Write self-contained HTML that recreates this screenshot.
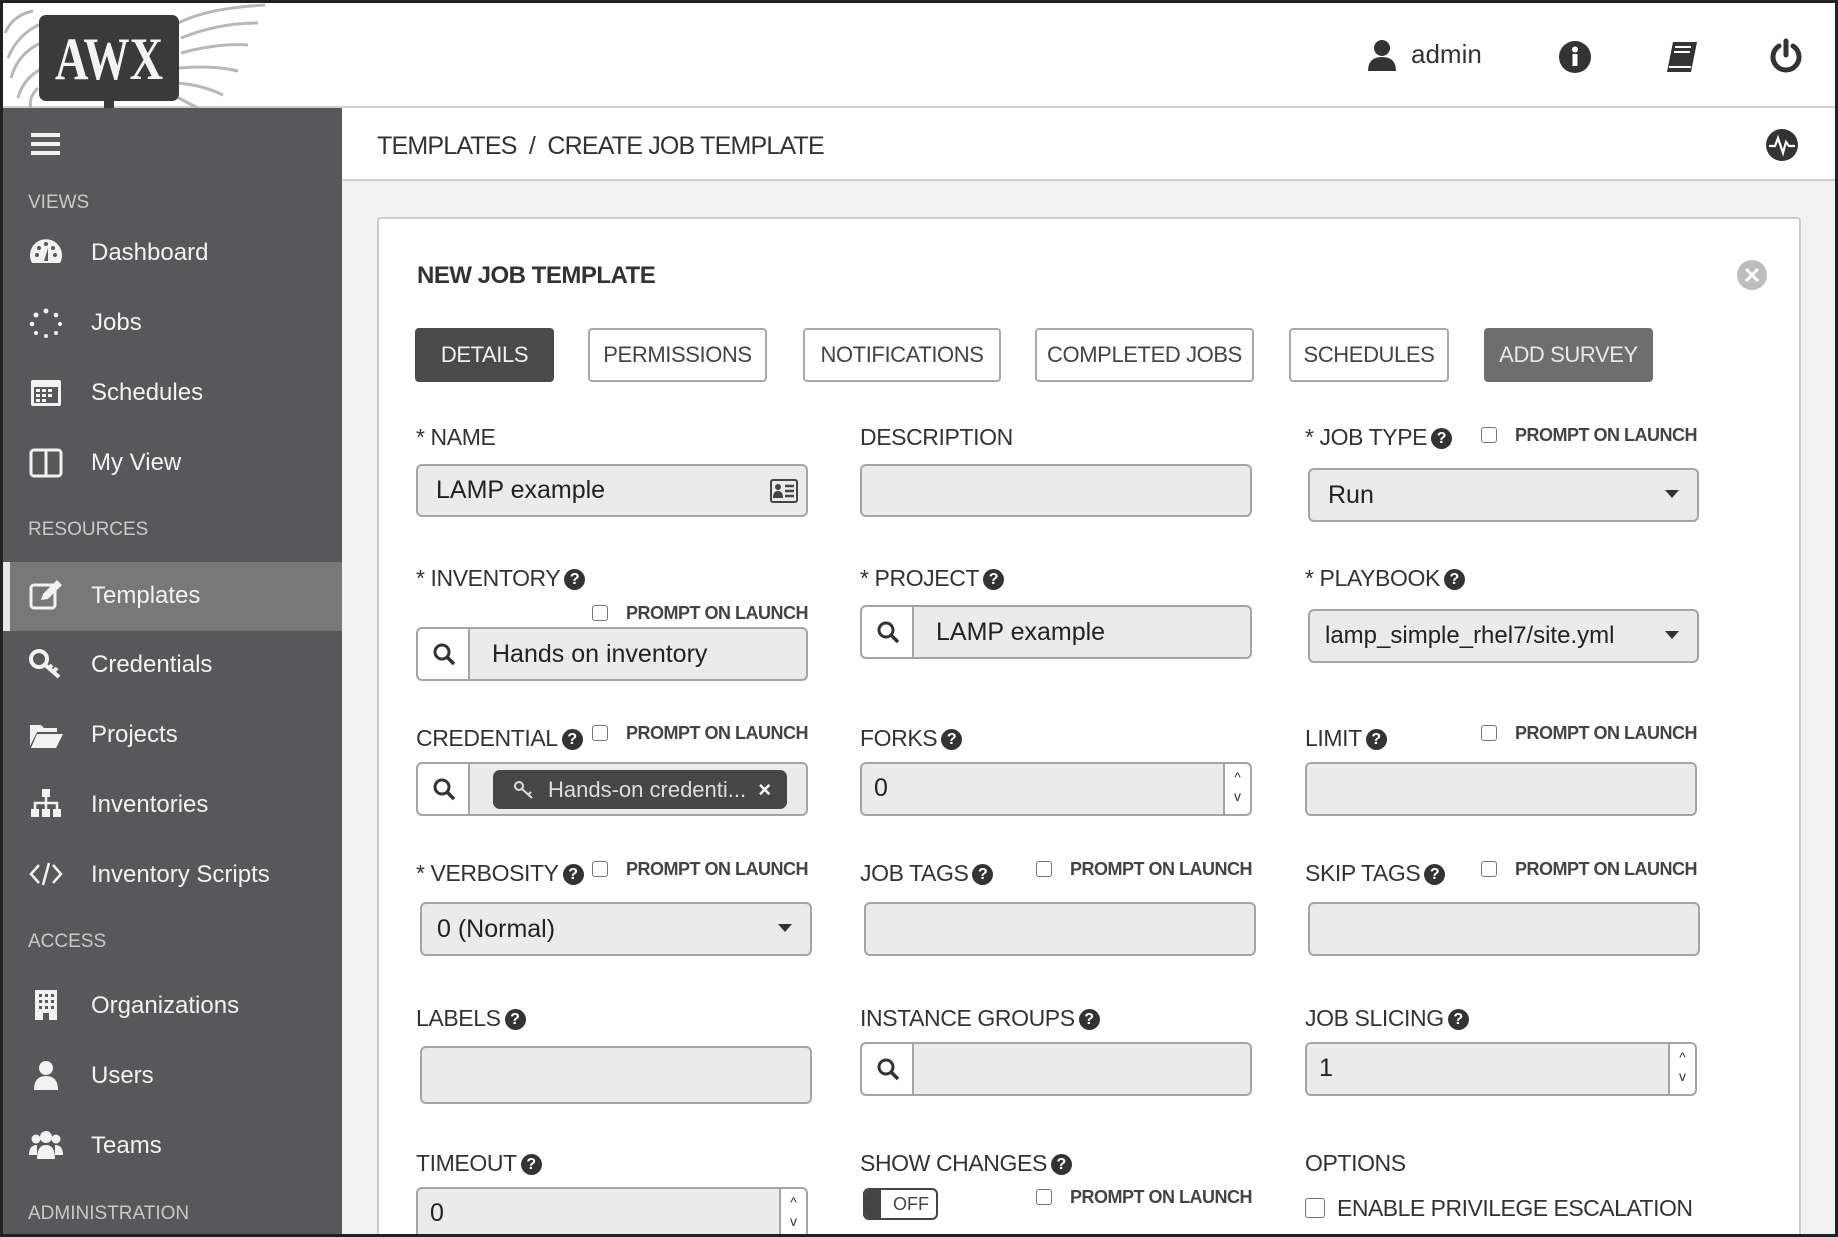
<!DOCTYPE html>
<html><head><meta charset="utf-8"><style>
*{box-sizing:border-box;margin:0;padding:0}
body{width:1838px;height:1237px;overflow:hidden;background:#222;font-family:"Liberation Sans",sans-serif;position:relative}
.a{position:absolute}
#frame{position:absolute;left:3px;top:3px;width:1832px;height:1231px;background:#f2f2f2;overflow:hidden}
#hdr{left:0;top:0;width:1832px;height:105px;background:#fff;border-bottom:2px solid #cfcfcf}
#side{left:0;top:105px;width:339px;height:1130px;background:#58585a}
.sec{color:#c9c9c9;font-size:19px;left:25px}
.it{color:#f2f2f2;font-size:24px;left:88px}
.ic{left:26px;width:34px;height:30px;fill:#f2f2f2}
#bc{left:339px;top:105px;width:1493px;height:73px;background:#fff;border-bottom:2px solid #cfcfcf}
#card{left:374px;top:214px;width:1424px;height:1030px;background:#fff;border:2px solid #cdcdcd;border-radius:4px}
.lbl{font-size:23px;color:#333;white-space:nowrap;letter-spacing:-0.4px}
.q{display:inline-block;width:21px;height:21px;border-radius:50%;background:#333;color:#fff;font-size:16px;font-weight:bold;text-align:center;line-height:21px;vertical-align:2px;margin-left:4px;letter-spacing:0}
.pol{font-size:18px;color:#444;white-space:nowrap;font-weight:bold;letter-spacing:-0.5px}
.cb{display:inline-block;width:16px;height:16px;border:1.5px solid #777;border-radius:3px;vertical-align:-2px;margin-right:18px;background:#fff}
.inp{background:#ebebeb;border:2px solid #a5a5a5;border-radius:6px;font-size:25px;color:#222;line-height:48px;padding-left:18px}
.tab{top:327px;height:54px;border:2px solid #aaa;border-radius:4px;background:#fff;color:#444;font-size:22px;text-align:center;line-height:50px;letter-spacing:-0.4px}
.srch{position:absolute;left:0;top:0;bottom:0;width:52px;background:#fff;border-right:2px solid #a5a5a5;border-radius:5px 0 0 5px}
.spin{position:absolute;right:0;top:0;bottom:0;width:27px;background:#fff;border-left:2px solid #a5a5a5;border-radius:0 5px 5px 0;font-size:14px;line-height:19px;text-align:center;color:#333;padding-top:4px}
.car{position:absolute;right:18px;top:20px;border-left:7px solid transparent;border-right:7px solid transparent;border-top:8px solid #333}
</style></head><body>
<div id="frame">
<div id="hdr" class="a">
 <svg class="a" style="left:0;top:0" width="270" height="108" viewBox="0 0 270 108">
  <g stroke="#b8b8b8" stroke-width="3" fill="none">
   <path d="M40 20 Q15 30 5 55 M38 40 Q15 50 8 75 M40 65 Q20 75 15 95 M35 85 Q25 95 28 105 M30 8 Q10 12 2 30"/>
   <path d="M175 20 Q205 5 262 2 M178 35 Q215 20 255 20 M178 50 Q215 40 245 42 M176 65 Q210 62 235 68 M174 80 Q200 82 220 92 M170 92 Q185 100 195 105"/>
  </g>
  <rect x="36" y="12" width="140" height="86" rx="7" fill="#3a3a3a"/>
  <rect x="101" y="96" width="10" height="12" fill="#3a3a3a"/>
  <text x="52" y="76" textLength="108" lengthAdjust="spacingAndGlyphs" font-family="Liberation Serif,serif" font-weight="bold" font-size="60" fill="#f4f4f4">AWX</text>
 </svg>
 <svg class="a" style="left:1364px;top:36px" width="30" height="32" viewBox="0 0 30 32"><circle cx="15" cy="9" r="8" fill="#333"/><path d="M1 32 Q1 18 15 18 Q29 18 29 32Z" fill="#333"/></svg>
 <div class="a" style="left:1408px;top:36px;font-size:26px;color:#333">admin</div>
 <svg class="a" style="left:1555px;top:37px" width="34" height="34" viewBox="0 0 34 34"><circle cx="17" cy="17" r="16" fill="#333"/><rect x="14.5" y="14" width="5" height="12" fill="#fff"/><circle cx="17" cy="9.5" r="3" fill="#fff"/></svg>
 <svg class="a" style="left:1660px;top:36px" width="36" height="36" viewBox="0 0 36 36"><path d="M10 3 H34 L28 33 H4 Z" fill="#333"/><path d="M12 8 H28 M11 13 H27" stroke="#fff" stroke-width="2"/><path d="M6 28 H28" stroke="#fff" stroke-width="2"/></svg>
 <svg class="a" style="left:1765px;top:35px" width="36" height="36" viewBox="0 0 36 36"><path d="M11 8 A13 13 0 1 0 25 8" stroke="#333" stroke-width="5" fill="none" stroke-linecap="round"/><line x1="18" y1="3" x2="18" y2="17" stroke="#333" stroke-width="5" stroke-linecap="round"/></svg>
</div>

<div id="side" class="a">
 <div class="a" style="left:28px;top:25px;width:29px;height:4px;background:#f2f2f2;box-shadow:0 9px 0 #f2f2f2,0 18px 0 #f2f2f2"></div>
 <div class="a sec" style="top:84px">VIEWS</div>
 <svg class="a ic" style="top:130px" viewBox="0 0 34 30"><path d="M3 25 A16 16 0 1 1 31 25 Z"/><g fill="#58585a"><circle cx="8" cy="17" r="2"/><circle cx="10" cy="10" r="2"/><circle cx="17" cy="6" r="2"/><circle cx="26" cy="17" r="2"/><circle cx="24" cy="10" r="2"/><path d="M15 23 L19 10 L19 23Z"/></g></svg>
 <div class="a it" style="top:131px">Dashboard</div>
 <svg class="a ic" style="top:200px" viewBox="0 0 34 30"><g><circle cx="17" cy="3" r="2.5"/><circle cx="27" cy="7" r="2.3"/><circle cx="31" cy="16" r="2"/><circle cx="27" cy="25" r="2"/><circle cx="17" cy="28" r="2"/><circle cx="7" cy="25" r="2"/><circle cx="3" cy="16" r="2.3"/><circle cx="7" cy="7" r="2.5"/></g></svg>
 <div class="a it" style="top:201px">Jobs</div>
 <svg class="a ic" style="top:268px" viewBox="0 0 34 30"><rect x="2" y="4" width="30" height="26" rx="2"/><g fill="#58585a"><rect x="5" y="11" width="24" height="16"/></g><g><rect x="7" y="13" width="4" height="3"/><rect x="13" y="13" width="4" height="3"/><rect x="19" y="13" width="4" height="3"/><rect x="7" y="18" width="4" height="3"/><rect x="13" y="18" width="4" height="3"/><rect x="19" y="18" width="4" height="3"/><rect x="7" y="23" width="4" height="3"/><rect x="13" y="23" width="4" height="3"/></g></svg>
 <div class="a it" style="top:271px">Schedules</div>
 <svg class="a ic" style="top:340px" viewBox="0 0 34 30"><rect x="2" y="2" width="30" height="26" rx="3" fill="none" stroke="#f2f2f2" stroke-width="3"/><line x1="17" y1="2" x2="17" y2="28" stroke="#f2f2f2" stroke-width="3"/></svg>
 <div class="a it" style="top:341px">My View</div>
 <div class="a sec" style="top:411px">RESOURCES</div>
 <div class="a" style="left:0;top:454px;width:339px;height:69px;background:#787878"></div>
 <div class="a" style="left:0;top:454px;width:7px;height:69px;background:#e8e8e8"></div>
 <svg class="a ic" style="top:472px" viewBox="0 0 34 30"><rect x="2" y="5" width="24" height="23" rx="3" fill="none" stroke="#f2f2f2" stroke-width="3"/><path d="M12 20 L14 14 L28 0 L33 5 L19 19 Z"/></svg>
 <div class="a it" style="top:474px">Templates</div>
 <svg class="a ic" style="top:541px" viewBox="0 0 34 30"><circle cx="10" cy="10" r="8" fill="none" stroke="#f2f2f2" stroke-width="4"/><path d="M15 15 L30 28 M24 23 L28 19 M20 19 L23 16" stroke="#f2f2f2" stroke-width="4"/></svg>
 <div class="a it" style="top:543px">Credentials</div>
 <svg class="a ic" style="top:612px" viewBox="0 0 34 30"><path d="M1 5 H12 L15 8 H28 V12 H8 L1 26Z"/><path d="M8 14 H34 L27 28 H2Z"/></svg>
 <div class="a it" style="top:613px">Projects</div>
 <svg class="a ic" style="top:680px" viewBox="0 0 34 30"><rect x="13" y="1" width="8" height="8"/><rect x="2" y="21" width="8" height="8"/><rect x="13" y="21" width="8" height="8"/><rect x="24" y="21" width="8" height="8"/><path d="M17 9 V21 M6 21 V15 H28 V21" stroke="#f2f2f2" stroke-width="2.5" fill="none"/></svg>
 <div class="a it" style="top:683px">Inventories</div>
 <svg class="a ic" style="top:751px" viewBox="0 0 34 30"><path d="M10 6 L2 15 L10 24 M24 6 L32 15 L24 24 M20 4 L14 26" stroke="#f2f2f2" stroke-width="2.5" fill="none"/></svg>
 <div class="a it" style="top:753px">Inventory Scripts</div>
 <div class="a sec" style="top:823px">ACCESS</div>
 <svg class="a ic" style="top:882px" viewBox="0 0 34 30"><rect x="6" y="0" width="22" height="30"/><g fill="#58585a"><rect x="10" y="4" width="3" height="3"/><rect x="16" y="4" width="3" height="3"/><rect x="22" y="4" width="3" height="3"/><rect x="10" y="10" width="3" height="3"/><rect x="16" y="10" width="3" height="3"/><rect x="22" y="10" width="3" height="3"/><rect x="10" y="16" width="3" height="3"/><rect x="16" y="16" width="3" height="3"/><rect x="22" y="16" width="3" height="3"/><rect x="14" y="23" width="6" height="7"/></g></svg>
 <div class="a it" style="top:884px">Organizations</div>
 <svg class="a ic" style="top:952px" viewBox="0 0 34 30"><circle cx="17" cy="8" r="7"/><path d="M5 30 Q5 16 17 16 Q29 16 29 30Z"/></svg>
 <div class="a it" style="top:954px">Users</div>
 <svg class="a ic" style="top:1021px" viewBox="0 0 34 30"><circle cx="17" cy="8" r="6"/><circle cx="7" cy="10" r="4.5"/><circle cx="27" cy="10" r="4.5"/><path d="M8 30 Q8 16 17 16 Q26 16 26 30Z"/><path d="M0 26 Q0 16 8 16 L8 26Z M34 26 Q34 16 26 16 L26 26Z"/></svg>
 <div class="a it" style="top:1024px">Teams</div>
 <div class="a sec" style="top:1095px">ADMINISTRATION</div>
</div>

<div id="bc" class="a">
 <div class="a" style="left:35px;top:24px;font-size:25px;color:#333;letter-spacing:-0.8px">TEMPLATES &nbsp;/&nbsp; CREATE JOB TEMPLATE</div>
 <svg class="a" style="left:1423px;top:20px" width="34" height="34" viewBox="0 0 34 34"><circle cx="17" cy="17" r="16" fill="#333"/><path d="M4 18 H10 L13 10 L18 25 L21 14 L24 18 H30" stroke="#fff" stroke-width="2.2" fill="none"/></svg>
</div>

<div id="card" class="a">
 <div class="a" style="left:38px;top:43px;font-size:24px;font-weight:bold;color:#333;letter-spacing:-0.5px">NEW JOB TEMPLATE</div>
 <svg class="a" style="left:1357px;top:40px" width="32" height="32" viewBox="0 0 32 32"><circle cx="16" cy="16" r="15" fill="#bdbdbd"/><path d="M10 10 L22 22 M22 10 L10 22" stroke="#fff" stroke-width="3"/></svg>
</div>

<div class="a tab" style="left:412px;width:139px;background:#4a4a4a;border-color:#4a4a4a;color:#f2f2f2;top:325px">DETAILS</div>
<div class="a tab" style="left:585px;width:179px;top:325px">PERMISSIONS</div>
<div class="a tab" style="left:800px;width:198px;top:325px">NOTIFICATIONS</div>
<div class="a tab" style="left:1032px;width:219px;top:325px">COMPLETED JOBS</div>
<div class="a tab" style="left:1286px;width:160px;top:325px">SCHEDULES</div>
<div class="a tab" style="left:1481px;width:169px;background:#6e6e6e;border-color:#6e6e6e;color:#e8e8e8;top:325px">ADD SURVEY</div>

<!-- Row 1 -->
<div class="a lbl" style="left:413px;top:421px">* NAME</div>
<div class="a inp" style="left:413px;top:461px;width:392px;height:53px">LAMP example
 <svg class="a" style="right:8px;top:13px" width="28" height="24" viewBox="0 0 28 24"><rect x="1" y="1" width="26" height="22" rx="2" fill="none" stroke="#444" stroke-width="2"/><circle cx="8" cy="8" r="3" fill="#444"/><path d="M3 19 Q3 12 8 12 Q13 12 13 19Z" fill="#444"/><path d="M15 7 H24 M15 12 H24 M15 17 H24" stroke="#444" stroke-width="2.5"/></svg></div>
<div class="a lbl" style="left:857px;top:421px">DESCRIPTION</div>
<div class="a inp" style="left:857px;top:461px;width:392px;height:53px"></div>
<div class="a lbl" style="left:1302px;top:421px">* JOB TYPE<span class="q">?</span></div>
<div class="a pol" style="left:1478px;top:422px"><span class="cb"></span>PROMPT ON LAUNCH</div>
<div class="a inp" style="left:1305px;top:465px;width:391px;height:54px;line-height:50px">Run<span class="car"></span></div>

<!-- Row 2 -->
<div class="a lbl" style="left:413px;top:562px">* INVENTORY<span class="q">?</span></div>
<div class="a pol" style="left:589px;top:600px"><span class="cb"></span>PROMPT ON LAUNCH</div>
<div class="a inp" style="left:413px;top:624px;width:392px;height:54px;padding-left:74px;line-height:50px"><div class="srch"><svg style="margin:13px 0 0 14px" width="24" height="24" viewBox="0 0 24 24"><circle cx="10" cy="10" r="7" stroke="#333" stroke-width="3" fill="none"/><path d="M15 15 L22 22" stroke="#333" stroke-width="3.5"/></svg></div>Hands on inventory</div>
<div class="a lbl" style="left:857px;top:562px">* PROJECT<span class="q">?</span></div>
<div class="a inp" style="left:857px;top:602px;width:392px;height:54px;padding-left:74px;line-height:50px"><div class="srch"><svg style="margin:13px 0 0 14px" width="24" height="24" viewBox="0 0 24 24"><circle cx="10" cy="10" r="7" stroke="#333" stroke-width="3" fill="none"/><path d="M15 15 L22 22" stroke="#333" stroke-width="3.5"/></svg></div>LAMP example</div>
<div class="a lbl" style="left:1302px;top:562px">* PLAYBOOK<span class="q">?</span></div>
<div class="a inp" style="left:1305px;top:606px;width:391px;height:54px;line-height:50px;font-size:24px;padding-left:15px">lamp_simple_rhel7/site.yml<span class="car"></span></div>

<!-- Row 3 -->
<div class="a lbl" style="left:413px;top:722px">CREDENTIAL<span class="q">?</span></div>
<div class="a pol" style="left:589px;top:720px"><span class="cb"></span>PROMPT ON LAUNCH</div>
<div class="a inp" style="left:413px;top:759px;width:392px;height:54px"><div class="srch"><svg style="margin:13px 0 0 14px" width="24" height="24" viewBox="0 0 24 24"><circle cx="10" cy="10" r="7" stroke="#333" stroke-width="3" fill="none"/><path d="M15 15 L22 22" stroke="#333" stroke-width="3.5"/></svg></div>
 <div class="a" style="left:75px;top:6px;width:294px;height:39px;background:#474747;border-radius:7px;color:#ddd;font-size:22px;line-height:39px;padding-left:55px">Hands-on credenti... <b style="color:#fff;margin-left:6px">×</b>
 <svg class="a" style="left:20px;top:10px" width="22" height="20" viewBox="0 0 22 20"><circle cx="6" cy="6" r="4" stroke="#ddd" stroke-width="2" fill="none"/><path d="M9 9 L19 18 M15 15 L18 12" stroke="#ddd" stroke-width="2"/></svg></div></div>
<div class="a lbl" style="left:857px;top:722px">FORKS<span class="q">?</span></div>
<div class="a inp" style="left:857px;top:759px;width:392px;height:54px;padding-left:12px">0<div class="spin">^<br>v</div></div>
<div class="a lbl" style="left:1302px;top:722px">LIMIT<span class="q">?</span></div>
<div class="a pol" style="left:1478px;top:720px"><span class="cb"></span>PROMPT ON LAUNCH</div>
<div class="a inp" style="left:1302px;top:759px;width:392px;height:54px"></div>

<!-- Row 4 -->
<div class="a lbl" style="left:413px;top:857px">* VERBOSITY<span class="q">?</span></div>
<div class="a pol" style="left:589px;top:856px"><span class="cb"></span>PROMPT ON LAUNCH</div>
<div class="a inp" style="left:417px;top:899px;width:392px;height:54px;padding-left:15px;line-height:50px">0 (Normal)<span class="car"></span></div>
<div class="a lbl" style="left:857px;top:857px">JOB TAGS<span class="q">?</span></div>
<div class="a pol" style="left:1033px;top:856px"><span class="cb"></span>PROMPT ON LAUNCH</div>
<div class="a inp" style="left:861px;top:899px;width:392px;height:54px"></div>
<div class="a lbl" style="left:1302px;top:857px">SKIP TAGS<span class="q">?</span></div>
<div class="a pol" style="left:1478px;top:856px"><span class="cb"></span>PROMPT ON LAUNCH</div>
<div class="a inp" style="left:1305px;top:899px;width:392px;height:54px"></div>

<!-- Row 5 -->
<div class="a lbl" style="left:413px;top:1002px">LABELS<span class="q">?</span></div>
<div class="a inp" style="left:417px;top:1043px;width:392px;height:58px"></div>
<div class="a lbl" style="left:857px;top:1002px">INSTANCE GROUPS<span class="q">?</span></div>
<div class="a inp" style="left:857px;top:1039px;width:392px;height:54px"><div class="srch"><svg style="margin:13px 0 0 14px" width="24" height="24" viewBox="0 0 24 24"><circle cx="10" cy="10" r="7" stroke="#333" stroke-width="3" fill="none"/><path d="M15 15 L22 22" stroke="#333" stroke-width="3.5"/></svg></div></div>
<div class="a lbl" style="left:1302px;top:1002px">JOB SLICING<span class="q">?</span></div>
<div class="a inp" style="left:1302px;top:1039px;width:392px;height:54px;padding-left:12px">1<div class="spin">^<br>v</div></div>

<!-- Row 6 -->
<div class="a lbl" style="left:413px;top:1147px">TIMEOUT<span class="q">?</span></div>
<div class="a inp" style="left:413px;top:1184px;width:392px;height:54px;padding-left:12px">0<div class="spin">^<br>v</div></div>
<div class="a lbl" style="left:857px;top:1147px">SHOW CHANGES<span class="q">?</span></div>
<div class="a" style="left:860px;top:1185px;width:75px;height:32px;border:2px solid #444;border-radius:6px;background:#fff;font-size:18px;color:#444;line-height:28px;padding-left:28px"><div class="a" style="left:0;top:0;width:16px;height:28px;background:#444;border-radius:4px 0 0 4px"></div>OFF</div>
<div class="a pol" style="left:1033px;top:1184px"><span class="cb"></span>PROMPT ON LAUNCH</div>
<div class="a lbl" style="left:1302px;top:1147px">OPTIONS</div>
<div class="a" style="left:1302px;top:1192px;font-size:23px;color:#333;white-space:nowrap;letter-spacing:-0.5px"><span class="cb" style="width:20px;height:20px;margin-right:12px"></span>ENABLE PRIVILEGE ESCALATION</div>
</div>
</body></html>
